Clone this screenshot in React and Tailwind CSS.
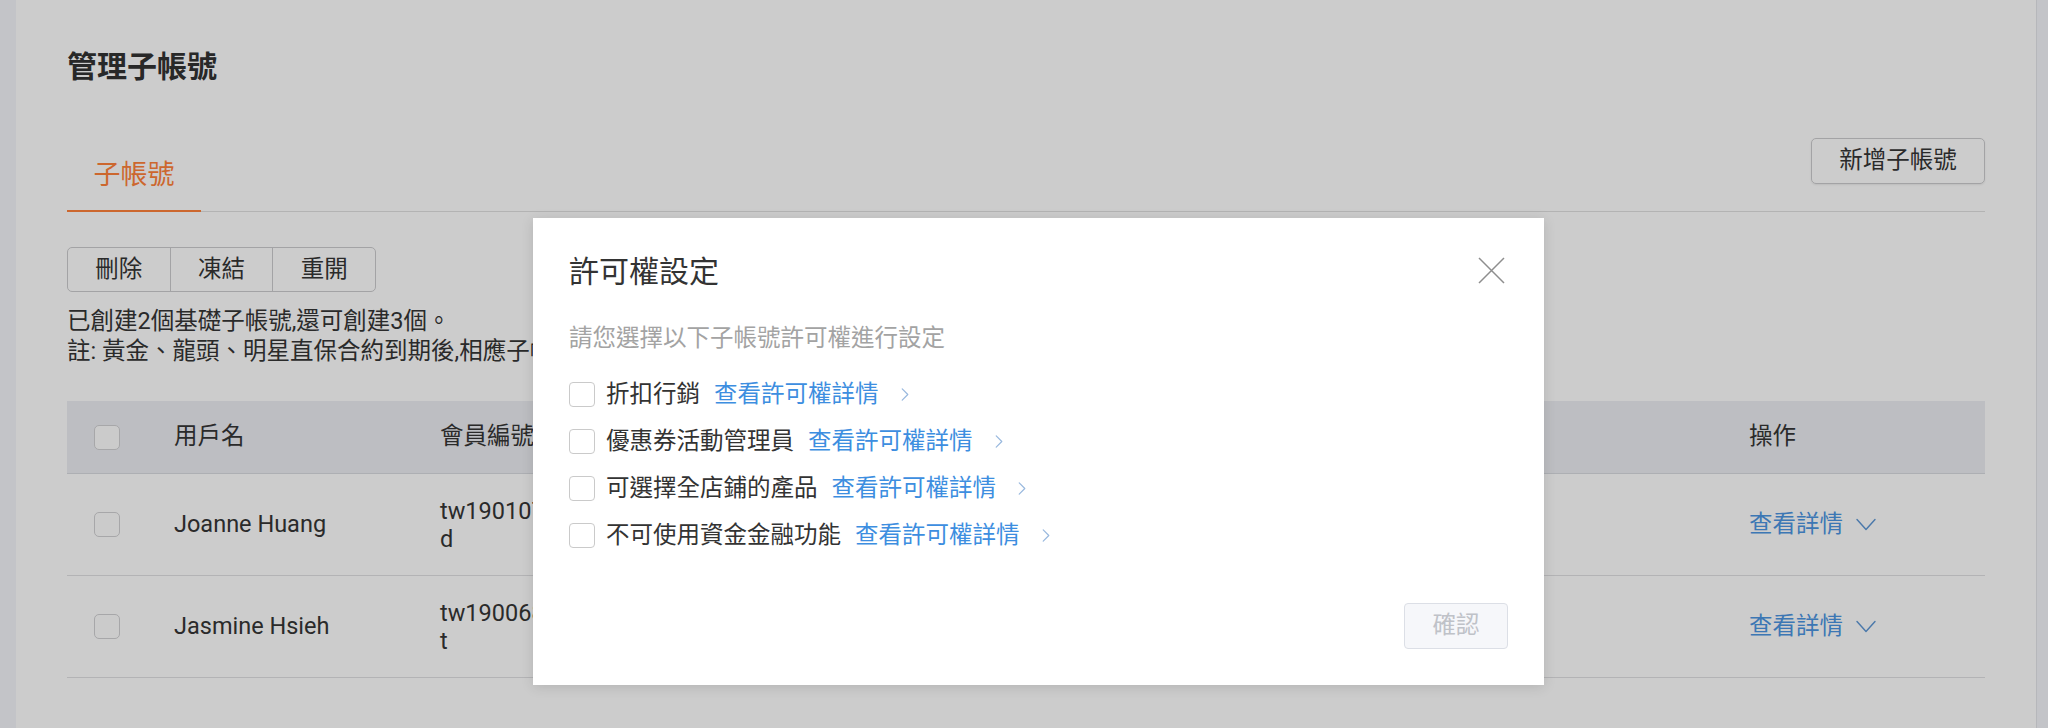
import React from "react";

function ChevronRight({ className }) {
  return (
    <svg className={className} viewBox="0 0 8 14" fill="none">
      <path d="M1 1 L7 7 L1 13" stroke="currentColor" strokeWidth="1.3" strokeLinecap="round" strokeLinejoin="round" />
    </svg>
  );
}

function ChevronDown({ className }) {
  return (
    <svg className={className} viewBox="0 0 20 13" fill="none">
      <path d="M1 1.5 L10 11.5 L19 1.5" stroke="currentColor" strokeWidth="1.4" strokeLinecap="round" strokeLinejoin="round" />
    </svg>
  );
}

function TableCheckbox() {
  return <div className="w-[26px] h-[25px] rounded-[5px] border-[1.5px] border-[#a7a7a9] bg-[#cbcbcb]" />;
}

const rows = [
  { name: "Joanne Huang", id1: "tw190107", id2: "d" },
  { name: "Jasmine Hsieh", id1: "tw190068", id2: "t" },
];

const perms = ["折扣行銷", "優惠券活動管理員", "可選擇全店鋪的產品", "不可使用資金金融功能"];

export default function App() {
  return (
    <div className="relative w-[2048px] h-[728px] overflow-hidden bg-[#cccccc] flex font-[Roboto,'Noto_Sans_CJK_TC',sans-serif] text-[#2a2a2a]">
      <div className="w-4 shrink-0 bg-[#c3c4c8]" />
      <main className="flex-1 px-[51px] pt-[47px]">
        <h1 className="text-[30px] leading-[40px] font-bold text-[#282828]">管理子帳號</h1>

        <div className="mt-[51px] flex items-end justify-between border-b border-[#b3b3b3]">
          <div className="w-[134px] h-[55px] -mb-px border-b-2 border-[#cc672e] text-center text-[27px] leading-[36px] text-[#cc672e]">
            子帳號
          </div>
          <button className="mb-[27px] h-[46px] w-[174px] rounded-[5px] border border-[#a3a3a5] text-[23.5px] text-[#2a2a2a] shadow-[0_1px_2px_rgba(0,0,0,0.08)]">
            新增子帳號
          </button>
        </div>

        <div className="mt-[35px] flex w-[309px] h-[45px] rounded-[5px] border border-[#a3a3a5] text-[23.5px] text-[#2a2a2a]">
          <button className="flex-1 flex items-center justify-center">刪除</button>
          <button className="flex-1 flex items-center justify-center border-l border-[#a3a3a5]">凍結</button>
          <button className="flex-1 flex items-center justify-center border-l border-[#a3a3a5]">重開</button>
        </div>

        <p className="mt-[14px] text-[23.5px] leading-[30px]">已創建2個基礎子帳號,還可創建3個。</p>
        <p className="text-[23.5px] leading-[30px] whitespace-nowrap">註: 黃金、龍頭、明星直保合約到期後,相應子帳</p>

        <div className="mt-[35px] text-[23.5px]">
          <div className="h-[73px] bg-[#bdbec2] border-b border-[#adafb3] flex items-center">
            <div className="w-[107px] pl-[27px] shrink-0"><TableCheckbox /></div>
            <div className="w-[266px] shrink-0">用戶名</div>
            <div className="w-[1309px] shrink-0 whitespace-nowrap">會員編號</div>
            <div className="flex-1">操作</div>
          </div>
          {rows.map((r) => (
            <div key={r.name} className="h-[102px] border-b border-[#b3b3b5] flex items-center">
              <div className="w-[107px] pl-[27px] shrink-0"><TableCheckbox /></div>
              <div className="w-[266px] shrink-0">{r.name}</div>
              <div className="w-[1309px] shrink-0 leading-[28px]">
                <div>{r.id1}</div>
                <div>{r.id2}</div>
              </div>
              <div className="flex-1 flex items-center text-[#3c77b4]">
                查看詳情
                <ChevronDown className="ml-[13px] w-[20px] h-[13px] text-[#4a78aa]" />
              </div>
            </div>
          ))}
        </div>
      </main>
      <div className="w-3 shrink-0 bg-[#c3c4c8] border-l border-[#b6b7bb]" />

      <div className="absolute left-[533px] top-[218px] w-[1011px] h-[467px] bg-white shadow-[0_2px_12px_rgba(0,0,0,0.12)] px-[36px] pt-[34px] pb-[36px] flex flex-col">
        <h2 className="text-[30px] leading-[40px] text-[#333333]">許可權設定</h2>
        <button className="absolute right-[39px] top-[39px] w-[27px] h-[27px]" aria-label="close">
          <svg viewBox="0 0 27 27" className="w-[27px] h-[27px]" fill="none">
            <path d="M1 1 L26 26 M26 1 L1 26" stroke="#8e8e8e" strokeWidth="1.5" />
          </svg>
        </button>
        <p className="mt-[30px] text-[23.5px] leading-[32px] text-[#a3a3a3]">請您選擇以下子帳號許可權進行設定</p>
        <div className="mt-[17px] flex flex-col">
          {perms.map((p) => (
            <div key={p} className="h-[47px] flex items-center text-[23.5px]">
              <div className="w-[26px] h-[25px] rounded-[4px] border-[1.5px] border-[#cacaca] bg-white" />
              <span className="ml-[11px] text-[#333333]">{p}</span>
              <span className="ml-[14px] text-[#3d8ee0]">查看許可權詳情</span>
              <ChevronRight className="ml-[22px] w-[8px] h-[13px] text-[#98b8de]" />
            </div>
          ))}
        </div>
        <div className="mt-auto flex justify-end">
          <button className="w-[104px] h-[46px] rounded-[4px] border border-[#dcdfe6] bg-[#f6f7fa] text-[23.5px] text-[#bfc2c8]">
            確認
          </button>
        </div>
      </div>
    </div>
  );
}
